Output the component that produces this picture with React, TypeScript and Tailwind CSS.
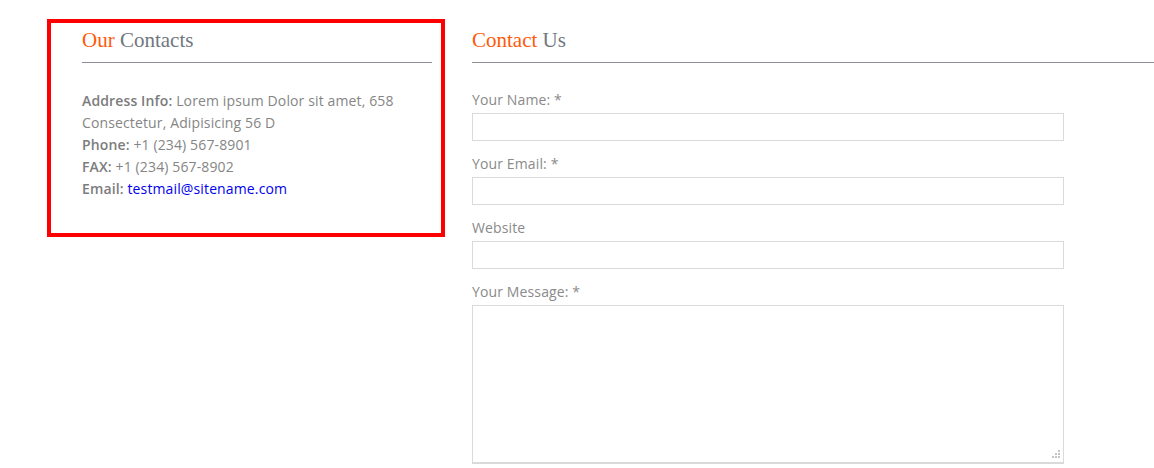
export default function App() {
  const fields = [
    { label: "Your Name: *" },
    { label: "Your Email: *" },
    { label: "Website" },
  ];

  return (
    <div className="flex h-[468px] w-[1154px] overflow-hidden bg-white font-['Open_Sans',sans-serif] text-[14px] tracking-[0.13px] text-[#858585]">
      <div className="ml-[47px] mt-[19px] h-[218px] w-[398px] shrink-0 border-4 border-[#ff0000] pl-[31px] pr-[9px] pt-[3px]">
        <h2 className="font-['Liberation_Serif',serif] text-[21px] leading-[28px] tracking-normal text-[#707780]">
          <span className="text-[#ff5a0a]">Our</span> Contacts
        </h2>
        <div className="mt-[8px] h-px bg-[#8c8f95]" />
        <div className="mt-[27px] leading-[22px]">
          <p>
            <span className="font-semibold text-[#7c7c7c]">Address Info:</span> Lorem ipsum Dolor sit amet, 658
            Consectetur, Adipisicing 56 D
          </p>
          <p>
            <span className="font-semibold text-[#7c7c7c]">Phone:</span> +1 (234) 567-8901
          </p>
          <p>
            <span className="font-semibold text-[#7c7c7c]">FAX:</span> +1 (234) 567-8902
          </p>
          <p>
            <span className="font-semibold text-[#7c7c7c]">Email:</span>{" "}
            <a href="#" className="text-[#0000ee]">
              testmail@sitename.com
            </a>
          </p>
        </div>
      </div>

      <div className="ml-[27px] mt-[26px] flex-1">
        <h2 className="font-['Liberation_Serif',serif] text-[21px] leading-[28px] tracking-normal text-[#707780]">
          <span className="text-[#ff5a0a]">Contact</span> Us
        </h2>
        <div className="mt-[8px] h-px bg-[#8c8f95]" />
        <form className="mt-[27px] w-[592px]">
          {fields.map((f) => (
            <div key={f.label} className="mb-[13px]">
              <label className="block leading-[20px] text-[#8a8a8a]">{f.label}</label>
              <input
                type="text"
                className="mt-[3px] block h-[28px] w-full border border-[#dadada] bg-white outline-none"
              />
            </div>
          ))}
          <label className="block leading-[20px] text-[#8a8a8a]">Your Message: *</label>
          <div className="relative mt-[3px]">
            <textarea className="block h-[159px] w-full resize-none border border-b-2 border-[#dadada] bg-white outline-none" />
            <svg
              className="absolute bottom-[4px] right-[4px]"
              width="10"
              height="10"
              viewBox="0 0 10 10"
              fill="#c4c4c4"
            >
              <rect x="8" y="0" width="2" height="2" />
              <rect x="5" y="3" width="2" height="2" />
              <rect x="8" y="3" width="2" height="2" />
              <rect x="2" y="6" width="2" height="2" />
              <rect x="5" y="6" width="2" height="2" />
              <rect x="8" y="6" width="2" height="2" />
            </svg>
          </div>
        </form>
      </div>
    </div>
  );
}
